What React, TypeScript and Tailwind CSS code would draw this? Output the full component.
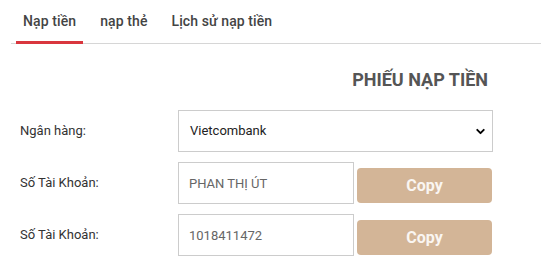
import { ChevronDown } from "lucide-react";

const tabs = ["Nạp tiền", "nạp thẻ", "Lịch sử nạp tiền"];

function Row({ label, value }: { label: string; value: string }) {
  return (
    <div className="flex items-start">
      <label className="w-[178px] pl-[20px] h-[42px] flex items-center text-[13px] text-[#333]">{label}</label>
      <input
        readOnly
        value={value}
        className="w-[176px] h-[42px] border border-[#ccc] px-[10px] text-[13px] text-[#666] outline-none"
      />
      <button className="ml-[3px] mt-[6px] w-[135px] h-[35px] rounded-[4px] bg-[#d3b597] text-[#faf6f2] font-bold text-[16px]">
        Copy
      </button>
    </div>
  );
}

export default function App() {
  return (
    <div className="w-[541px] h-[266px] overflow-hidden bg-white font-['Roboto',sans-serif]">
      {/* Tabs */}
      <div className="ml-[11px] border-b border-[#d6d6d6] flex pl-[5px] pt-[11px]">
        {tabs.map((t, i) => (
          <div
            key={t}
            className={
              "px-[7px] mr-[10px] h-[26px] text-[14px] font-medium text-[#444] tracking-[0.1px] " +
              (i === 0 ? "border-b-[3px] border-[#d9363e] -mb-[1px] h-[33px]" : "")
            }
          >
            {t}
          </div>
        ))}
      </div>

      {/* Form */}
      <div className="pt-[26px]">
        <h2 className="text-right pr-[53px] text-[18px] font-bold text-[#555] leading-[20px]">PHIẾU NẠP TIỀN</h2>
        <div className="mt-[20px] flex flex-col gap-[10px]">
          <div className="flex items-center">
            <label className="w-[178px] pl-[20px] text-[13px] text-[#333]">Ngân hàng:</label>
            <div className="relative w-[315px] h-[42px] border border-[#ccc] flex items-center pl-[11px] text-[13px] text-[#222]">
              Vietcombank
              <ChevronDown className="absolute right-[5px] w-[13px] h-[13px] text-black" strokeWidth={3.5} />
            </div>
          </div>
          <Row label="Số Tài Khoản:" value="PHAN THỊ ÚT" />
          <Row label="Số Tài Khoản:" value="1018411472" />
        </div>
      </div>
    </div>
  );
}
